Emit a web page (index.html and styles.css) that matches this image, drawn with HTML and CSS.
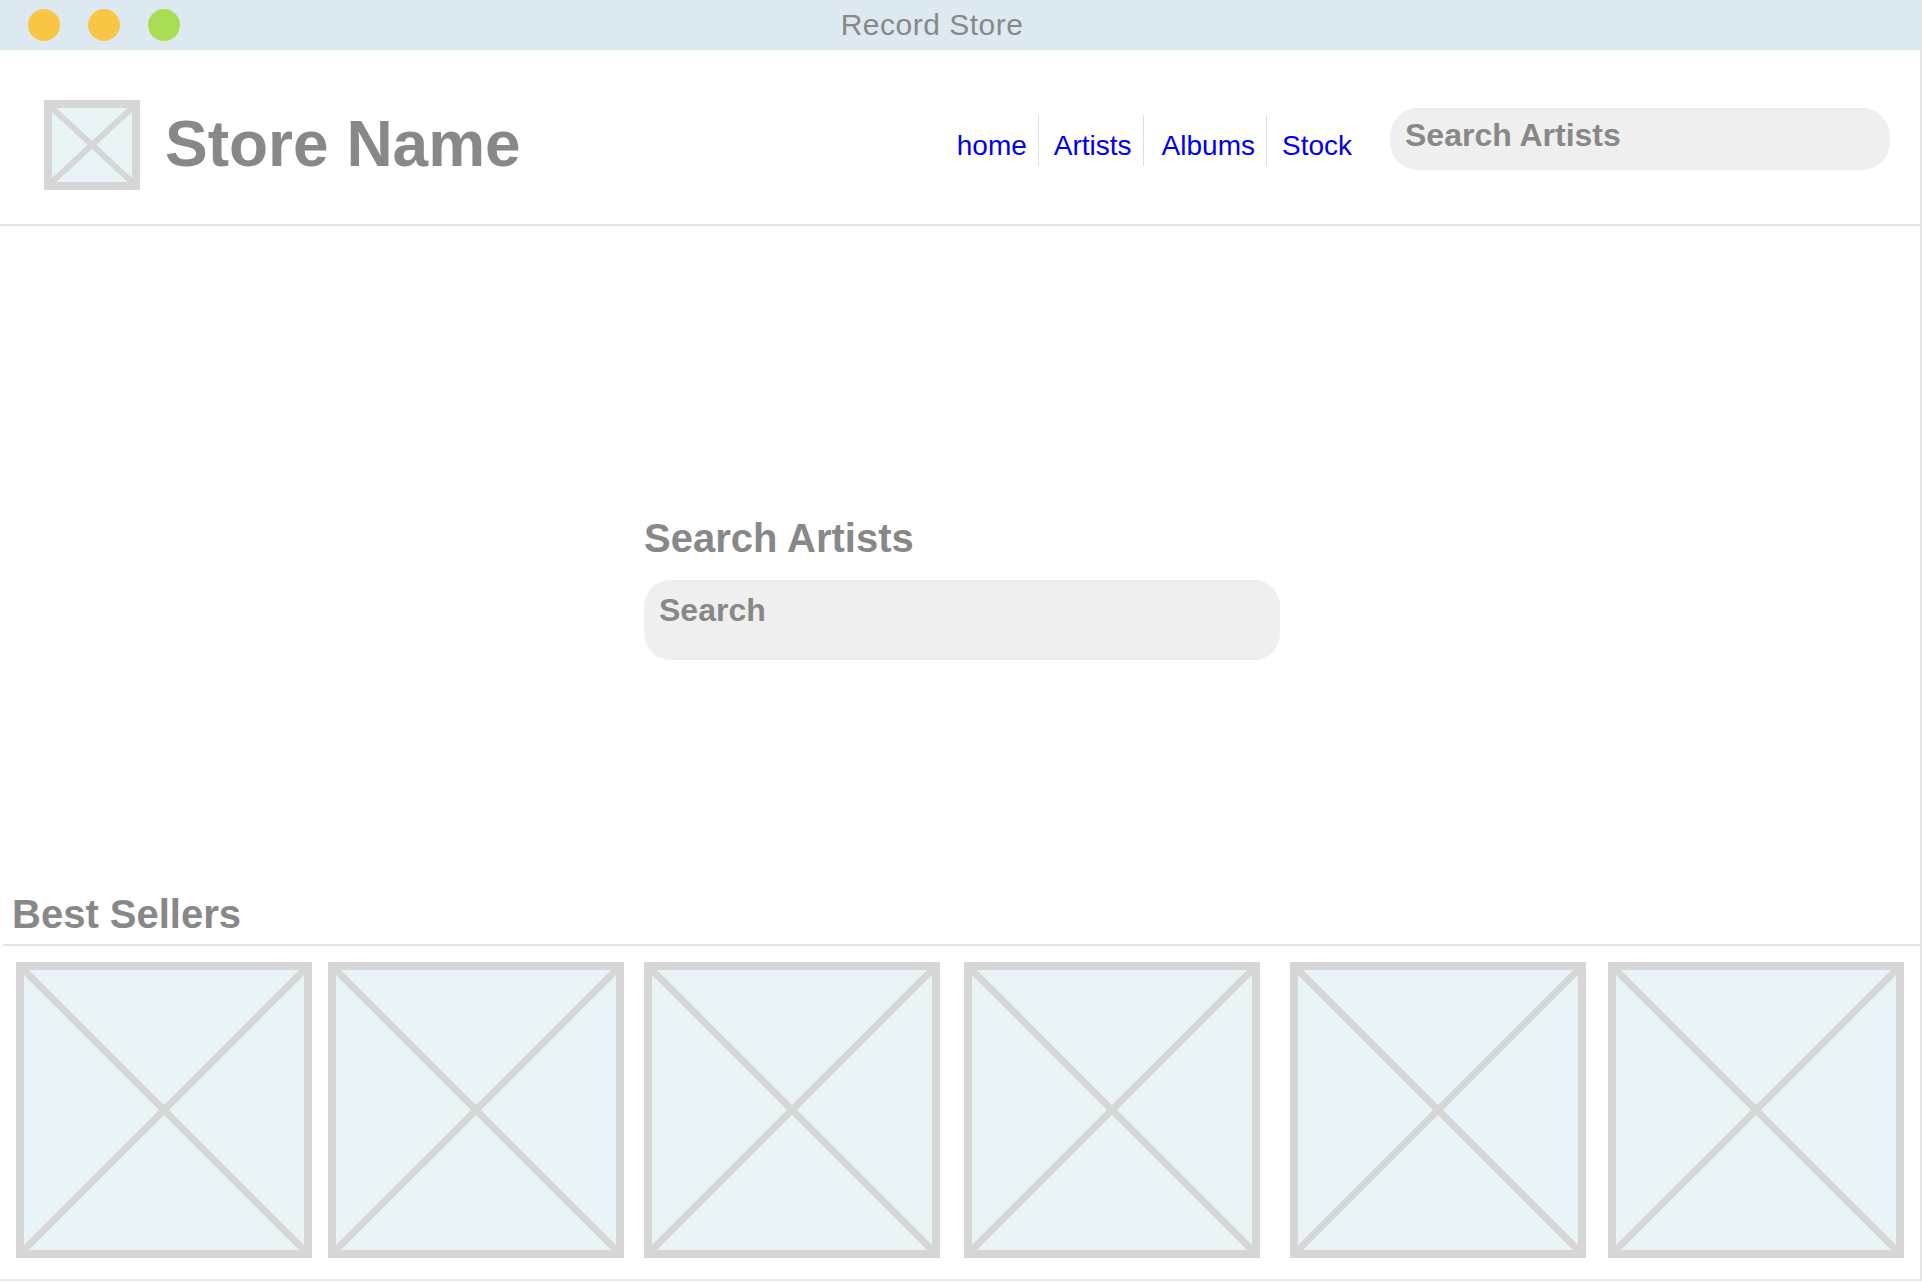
FILE: index.html
```html
<!DOCTYPE html>
<html lang="en">
<head>
<meta charset="utf-8">
<title>Record Store</title>
<link rel="stylesheet" href="styles.css">
</head>
<body>
<div class="window">
  <div class="titlebar">
    <div class="dots">
      <span class="dot dot-yellow"></span>
      <span class="dot dot-yellow"></span>
      <span class="dot dot-green"></span>
    </div>
    <div class="window-title">Record Store</div>
  </div>

  <header class="header">
    <div class="logo placeholder">
      <svg class="x" viewBox="0 0 80 74" preserveAspectRatio="none">
        <line x1="0" y1="0" x2="80" y2="74"/>
        <line x1="80" y1="0" x2="0" y2="74"/>
      </svg>
    </div>
    <h1 class="store-name">Store Name</h1>
    <nav class="nav">
      <ul class="nav-list">
        <li class="nav-item"><a href="#">home</a></li>
        <li class="nav-item"><a href="#">Artists</a></li>
        <li class="nav-item"><a href="#">Albums</a></li>
        <li class="nav-item"><a href="#">Stock</a></li>
      </ul>
    </nav>
    <input class="search search-top" type="text" placeholder="Search Artists">
  </header>

  <main class="hero">
    <h2 class="hero-title">Search Artists</h2>
    <input class="search search-hero" type="text" placeholder="Search">
  </main>

  <section class="best">
    <h2 class="best-title">Best Sellers</h2>
    <div class="thumbs">
      <div class="thumb placeholder"><svg class="x" viewBox="0 0 280 280"><line x1="0" y1="0" x2="280" y2="280"/><line x1="280" y1="0" x2="0" y2="280"/></svg></div>
      <div class="thumb placeholder"><svg class="x" viewBox="0 0 280 280"><line x1="0" y1="0" x2="280" y2="280"/><line x1="280" y1="0" x2="0" y2="280"/></svg></div>
      <div class="thumb placeholder"><svg class="x" viewBox="0 0 280 280"><line x1="0" y1="0" x2="280" y2="280"/><line x1="280" y1="0" x2="0" y2="280"/></svg></div>
      <div class="thumb placeholder"><svg class="x" viewBox="0 0 280 280"><line x1="0" y1="0" x2="280" y2="280"/><line x1="280" y1="0" x2="0" y2="280"/></svg></div>
      <div class="thumb placeholder"><svg class="x" viewBox="0 0 280 280"><line x1="0" y1="0" x2="280" y2="280"/><line x1="280" y1="0" x2="0" y2="280"/></svg></div>
      <div class="thumb placeholder"><svg class="x" viewBox="0 0 280 280"><line x1="0" y1="0" x2="280" y2="280"/><line x1="280" y1="0" x2="0" y2="280"/></svg></div>
    </div>
  </section>
</div>
</body>
</html>
```
FILE: styles.css
```css
html, body {
  margin: 0;
  padding: 0;
  background: #ffffff;
}

body {
  font-family: "Liberation Sans", Arial, Helvetica, sans-serif;
  color: #888888;
}

.window {
  width: 1920px;
  border-right: 2px solid #e6e6e6;
  overflow: hidden;
}

/* title bar */
.titlebar {
  height: 50px;
  background: #dde9f1;
  display: flex;
  align-items: center;
}

.dots {
  display: flex;
  gap: 28px;
  padding-left: 28px;
}

.dot {
  width: 32px;
  height: 32px;
  border-radius: 50%;
  display: block;
}

.dot-yellow { background: #f8c545; }
.dot-green { background: #a8dc54; }

.window-title {
  flex: 1;
  text-align: center;
  padding-right: 236px;
  font-size: 30px;
  letter-spacing: 0.5px;
  color: #888888;
  line-height: 1;
}

/* header */
.header {
  height: 176px;
  box-sizing: border-box;
  padding: 50px 30px 0 44px;
  border-bottom: 2px solid #e3e3e3;
  display: flex;
  align-items: flex-start;
}

.placeholder {
  box-sizing: border-box;
  border: 8px solid #d6d6d6;
  background: #e8f3f5;
  flex: none;
}

.placeholder .x {
  display: block;
  width: 100%;
  height: 100%;
  overflow: hidden;
}

.placeholder .x line {
  stroke: #d6d6d6;
  stroke-width: 7;
}

.logo {
  width: 96px;
  height: 90px;
}

.logo .x line {
  stroke-width: 6;
}

.store-name {
  margin: 8px 0 0 25px;
  font-size: 64px;
  line-height: 1.15;
  font-weight: bold;
  color: #888888;
}

.nav {
  margin-left: auto;
  margin-top: 15px;
}

.nav-list {
  list-style: none;
  margin: 0;
  padding: 0;
  display: flex;
}

.nav-item {
  height: 51px;
  box-sizing: border-box;
  padding: 11px 11px 0 15px;
  border-left: 1px solid #dedede;
  display: flex;
  align-items: center;
}

.nav-item:first-child {
  border-left: none;
  padding-left: 0;
}

.nav-item:nth-child(3) {
  padding-left: 18px;
}

.nav-item:last-child {
  padding-right: 0;
}

.nav-item a {
  font-size: 28px;
  line-height: 1.15;
  color: #0000ee;
  text-decoration: none;
}

/* search inputs */
.search {
  box-sizing: border-box;
  border: none;
  outline: none;
  background: #efefef;
  font-family: "Liberation Sans", Arial, Helvetica, sans-serif;
  font-weight: bold;
  font-size: 32px;
  color: #888888;
  margin: 0;
}

.search::placeholder {
  color: #888888;
  opacity: 1;
}

.search-top {
  width: 500px;
  height: 62px;
  margin-left: 38px;
  margin-top: 8px;
  border-radius: 28px;
  padding: 0 15px 7px 15px;
  flex: none;
}

/* hero */
.hero {
  width: 636px;
  margin: 0 auto;
  padding: 289px 0 0 4px;
}

.hero-title {
  margin: 0 0 19px 0;
  font-size: 40px;
  line-height: 46px;
  font-weight: bold;
  color: #888888;
}

.search-hero {
  display: block;
  width: 100%;
  height: 80px;
  border-radius: 26px;
  padding: 0 15px 19px 15px;
}

/* best sellers */
.best {
  margin-top: 231px;
}

.best-title {
  margin: 0 0 0 3px;
  padding: 0 0 7px 9px;
  border-bottom: 2px solid #e3e3e3;
  font-size: 40px;
  line-height: 46px;
  font-weight: bold;
  color: #888888;
}

.thumbs {
  display: flex;
  padding: 16px 16px 21px 16px;
  border-bottom: 2px solid #e8e8e8;
}

.thumb {
  width: 296px;
  height: 296px;
}

.thumb:nth-child(2) { margin-left: 16px; }
.thumb:nth-child(3) { margin-left: 20px; }
.thumb:nth-child(4) { margin-left: 24px; }
.thumb:nth-child(5) { margin-left: 30px; }
.thumb:nth-child(6) { margin-left: 22px; }
```
